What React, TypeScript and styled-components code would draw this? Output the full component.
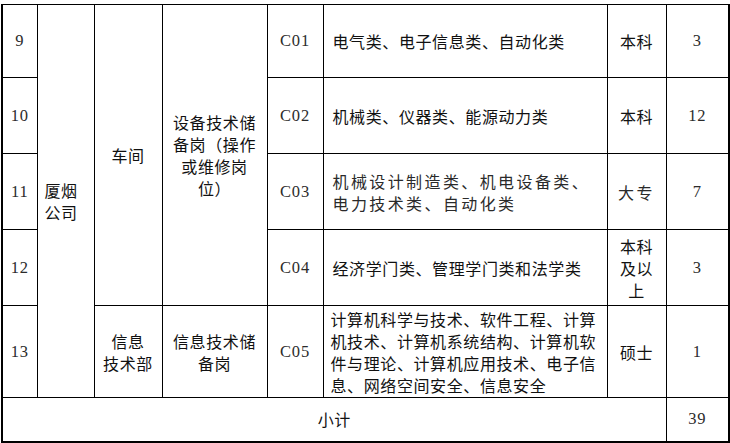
import React from "react";
import styled, { createGlobalStyle } from "styled-components";

const Global = createGlobalStyle`
    html, body {
        margin: 0;
        padding: 0;
        background: #ffffff;
    }
`;

const Page = styled.div`
    padding: 4px 0 0 1px;
    width: 730px;
    height: 443px;
    box-sizing: border-box;
    overflow: hidden;
`;

const Table = styled.table`
    border-collapse: collapse;
    table-layout: fixed;
    width: 727px;
    border-left: 2px solid #000;
    border-right: 2px solid #000;
    border-top: 1px solid #000;
    border-bottom: 2px solid #000;
    font-family: "Noto Sans CJK SC", "Noto Sans", sans-serif;
    font-size: 16px;
    color: #000;
`;

const Row = styled.tr<{ $h: number }>`
    height: ${(p) => p.$h}px;
`;

const Cell = styled.td<{ $align?: "left" | "center"; $pad?: number; $spread?: number; $soft?: boolean }>`
    border: 1px solid #000;
    padding: 0 ${(p) => (p.$align === "left" ? 4 : 2)}px 0 ${(p) => p.$pad ?? 2}px;
    text-align: ${(p) => p.$align ?? "center"};
    vertical-align: middle;
    line-height: 22px;
    letter-spacing: ${(p) => p.$spread ?? 0.6}px;
    color: ${(p) => (p.$soft ? "#2a2a2a" : "#111")};
    white-space: nowrap;
`;

const WrapCell = styled(Cell)`
    white-space: normal;
    word-break: break-all;
`;

const Num = styled(Cell)`
    font-family: "Liberation Serif", "DejaVu Serif", serif;
    font-size: 16.5px;
    letter-spacing: 0.8px;
    color: #2b2b2b;
`;

interface IRow {
    no: string;
    code: string;
    major: React.ReactNode;
    degree: React.ReactNode;
    count: string;
    h: number;
    soft?: boolean;
}

const rows: IRow[] = [
    { no: "9", code: "C01", major: "电气类、电子信息类、自动化类", degree: "本科", count: "3", h: 73 },
    { no: "10", code: "C02", major: "机械类、仪器类、能源动力类", degree: "本科", count: "12", h: 76 },
    {
        no: "11", code: "C03", soft: true,
        major: <>机械设计制造类、机电设备类、<br />电力技术类、自动化类</>,
        degree: "大专", count: "7", h: 76,
    },
    {
        no: "12", code: "C04", major: "经济学门类、管理学门类和法学类",
        degree: <>本科<br />及以<br />上</>, count: "3", h: 76,
    },
];

const App: React.FC = () => {
    return (
        <Page>
            <Global />
            <Table>
                <colgroup>
                    <col style={{ width: 35 }} />
                    <col style={{ width: 57 }} />
                    <col style={{ width: 68 }} />
                    <col style={{ width: 105 }} />
                    <col style={{ width: 56 }} />
                    <col style={{ width: 284 }} />
                    <col style={{ width: 59 }} />
                    <col style={{ width: 63 }} />
                </colgroup>
                <tbody>
                    {rows.map((r, i) => (
                        <Row $h={r.h} key={r.no}>
                            <Num>{r.no}</Num>
                            {i === 0 && (
                                <>
                                    <Cell rowSpan={5} $align="left" $pad={7}>厦烟<br />公司</Cell>
                                    <Cell rowSpan={4}>车间</Cell>
                                    <Cell rowSpan={4}>设备技术储<br />备岗（操作<br />或维修岗<br />位）</Cell>
                                </>
                            )}
                            <Num>{r.code}</Num>
                            <Cell $align="left" $pad={9} $spread={r.soft ? 2.4 : 0.6} $soft={r.soft}>{r.major}</Cell>
                            <Cell $spread={r.soft ? 2.4 : 0.6} $soft={r.soft}>{r.degree}</Cell>
                            <Num>{r.count}</Num>
                        </Row>
                    ))}
                    <Row $h={92}>
                        <Num>13</Num>
                        <Cell>信息<br />技术部</Cell>
                        <Cell>信息技术储<br />备岗</Cell>
                        <Num>C05</Num>
                        <WrapCell $align="left" $pad={7}>
                            计算机科学与技术、软件工程、计算<br />
                            机技术、计算机系统结构、计算机软<br />
                            件与理论、计算机应用技术、电子信<br />
                            息、网络空间安全、信息安全
                        </WrapCell>
                        <Cell>硕士</Cell>
                        <Num>1</Num>
                    </Row>
                    <Row $h={44}>
                        <Cell colSpan={7}>小计</Cell>
                        <Num>39</Num>
                    </Row>
                </tbody>
            </Table>
        </Page>
    );
};

export default App;
